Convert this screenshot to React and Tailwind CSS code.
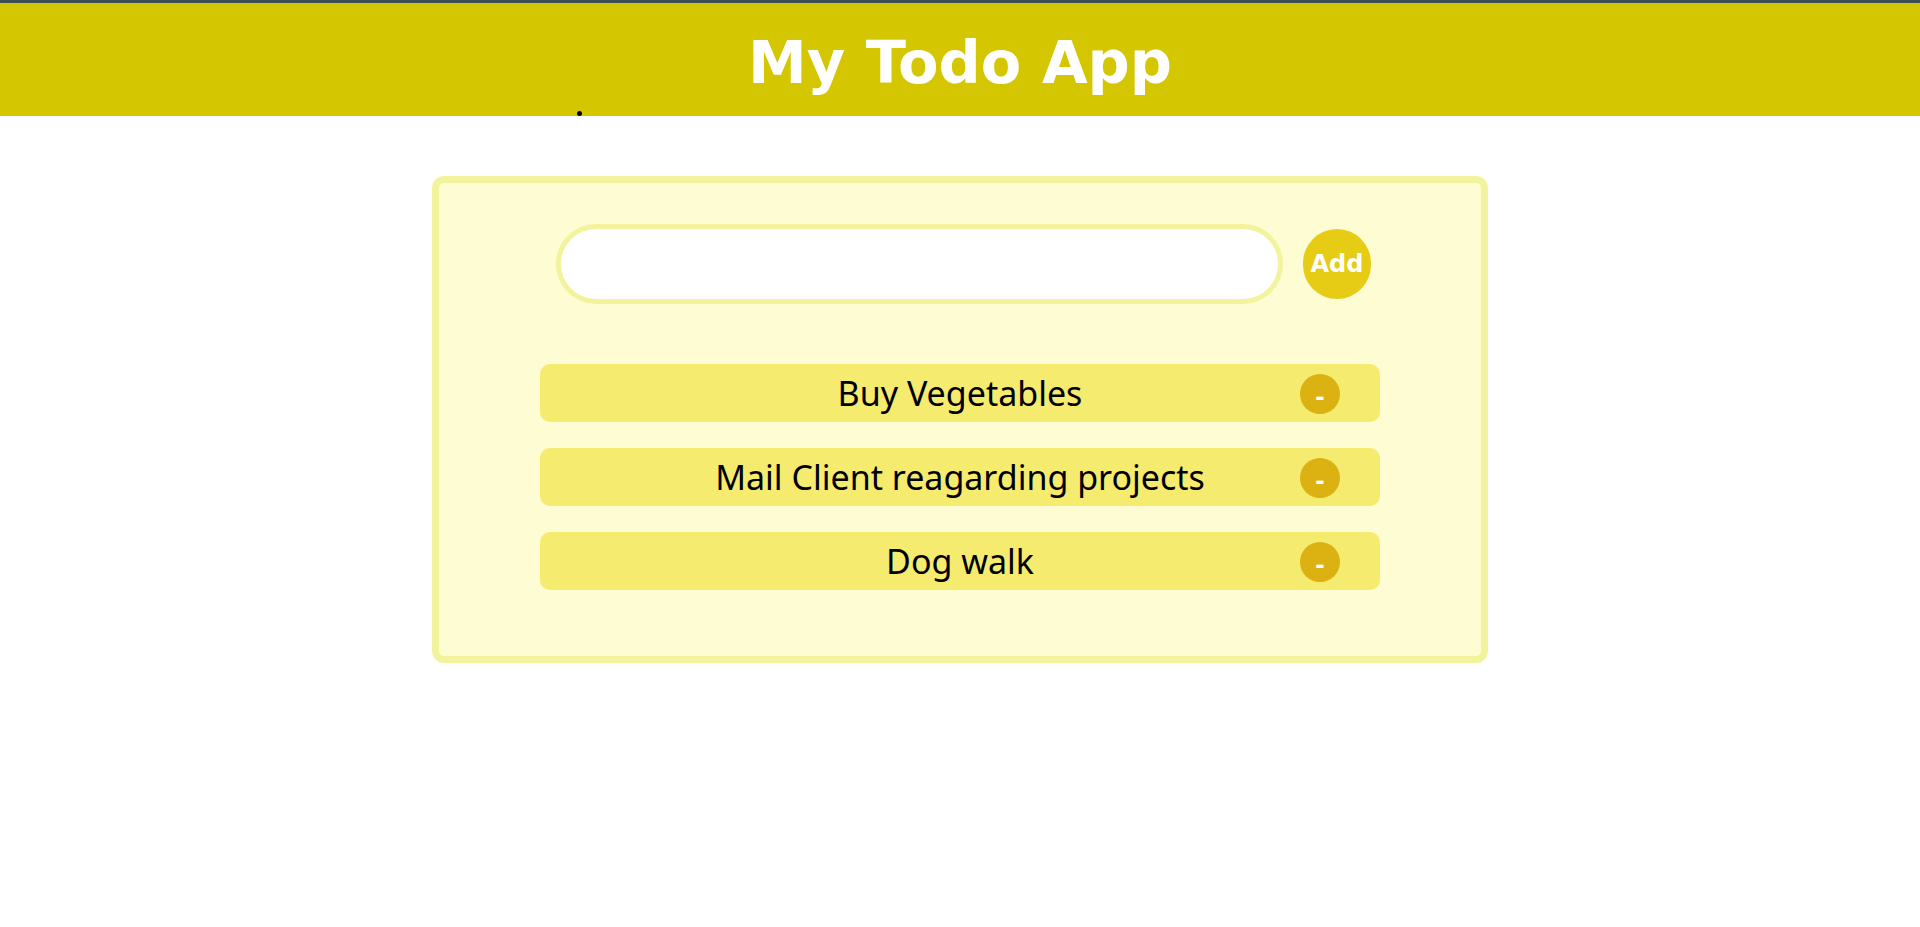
import { useState } from "react";

const initialTodos = ["Buy Vegetables", "Mail Client reagarding projects", "Dog walk"];

function TodoItem({ text, onRemove }) {
  return (
    <li className="relative flex items-center justify-center h-[58px] w-full rounded-[10px] bg-[#f5eb6f]">
      <span
        className="text-[34px] leading-none text-black"
        style={{ fontFamily: '"Comic Sans MS", "Noto Sans", sans-serif' }}
      >
        {text}
      </span>
      <button
        onClick={onRemove}
        className="absolute right-[40px] top-[10px] flex items-center justify-center w-[40px] h-[40px] rounded-full bg-[#dbb211] text-white text-[28px] font-bold leading-none pt-[6px]"
        style={{ fontFamily: '"Liberation Sans", Arial, sans-serif' }}
      >
        -
      </button>
    </li>
  );
}

export default function App() {
  const [todos, setTodos] = useState(initialTodos);
  const [value, setValue] = useState("");

  const addTodo = () => {
    if (!value.trim()) return;
    setTodos([...todos, value.trim()]);
    setValue("");
  };

  return (
    <div className="min-h-[927px] bg-white" style={{ fontFamily: '"DejaVu Sans", sans-serif' }}>
      {/* header */}
      <header className="relative border-t-[3px] border-[#3d4f55] bg-[#d4c600]">
        <div className="flex h-[113px] items-center justify-center pt-[5px]">
          <h1 className="text-[59px] font-bold leading-none text-white">My Todo App</h1>
        </div>
        <span className="absolute left-[577px] top-[108px] h-[5px] w-[5px] rounded-full bg-black" />
      </header>

      {/* card */}
      <main className="flex justify-center pt-[60px]">
        <div className="w-[1056px] rounded-[12px] border-[7px] border-[#f3f39e] bg-[#fefcd2] pt-[41px] pb-[66px]">
          <div className="flex items-center justify-center pl-[7px]">
            <input
              value={value}
              onChange={(e) => setValue(e.target.value)}
              className="h-[80px] w-[727px] rounded-full border-[5px] border-[#f3f39e] bg-white px-8 text-[24px] outline-none"
            />
            <button
              onClick={addTodo}
              className="ml-[20px] flex h-[70px] w-[68px] items-center justify-center rounded-full bg-[#e6cc14] text-[24px] font-bold text-white"
            >
              Add
            </button>
          </div>

          <ul className="mx-auto mt-[60px] flex w-[840px] flex-col gap-[26px]">
            {todos.map((t, i) => (
              <TodoItem key={i} text={t} onRemove={() => setTodos(todos.filter((_, j) => j !== i))} />
            ))}
          </ul>
        </div>
      </main>
    </div>
  );
}
